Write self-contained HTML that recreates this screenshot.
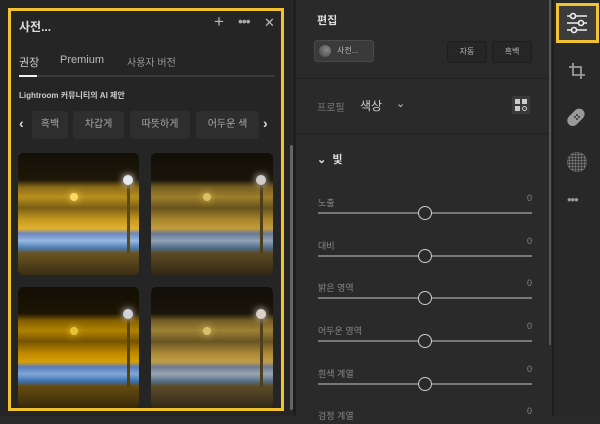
<!DOCTYPE html>
<html><head><meta charset="utf-8"><style>
*{box-sizing:border-box;margin:0;padding:0}
body{width:600px;height:416px;overflow:hidden;background:#2a2a2a;font-family:"Liberation Sans","Noto Sans CJK KR",sans-serif;color:#ddd;position:relative}
.a{position:absolute}
.img{position:absolute;border-radius:5px;overflow:hidden;background:linear-gradient(180deg,#141008 0%,#1d1708 22%,#8a6a18 28%,#b8901e 36%,#7a5e16 45%,#c89a20 55%,#e0b030 62%,#6a88c0 66%,#98b8e0 72%,#4a7ab0 78%,#6a5420 82%,#3a2e14 100%)}
.img::after{content:"";position:absolute;left:105px;top:22px;width:10px;height:10px;border-radius:50%;background:#e8e8f0;box-shadow:0 0 8px #fff}
.img::before{content:"";position:absolute;left:52px;top:40px;width:8px;height:8px;border-radius:50%;background:#ffd860;box-shadow:0 0 8px #ffd860}
.img i{position:absolute;left:109px;top:30px;width:3px;height:70px;background:#5a4818}
.sl{position:absolute;left:318px;width:214px}
.sl .l{font-size:9px;color:#888}
.sl .v{position:absolute;right:0;top:0;font-size:9px;color:#888}
.sl .t{position:absolute;left:0;right:0;top:19px;height:2px;background:#777}
.sl .k{position:absolute;left:100px;top:13px;width:14px;height:14px;border-radius:50%;border:1.5px solid #ccc;background:#2a2a2a}
.btn{position:absolute;border:1px solid #1e1e1e;background:#262626;border-radius:3px;font-size:8px;color:#bbb;text-align:center;line-height:20px}
.chip{position:absolute;top:111px;height:28px;background:#2e2e2e;border-radius:3px;font-size:10px;color:#aaa;text-align:center;line-height:28px}
</style></head><body>
<div class="a" style="left:0;top:0;width:292px;height:416px;background:#252525"></div>
<div class="a" style="left:8px;top:8px;width:276px;height:403px;border:3px solid #f2c230"></div>
<div class="a" style="left:19px;top:18px;font-size:12px;color:#ddd;font-weight:bold">사전...</div>
<div class="a" style="left:214px;top:12px;font-size:17px;color:#bbb">+</div>
<div class="a" style="left:238px;top:13px;font-size:14px;color:#aaa;letter-spacing:-1px">•••</div>
<div class="a" style="left:264px;top:15px;font-size:13px;color:#bbb">✕</div>
<div class="a" style="left:19px;top:54px;font-size:11px;color:#ccc">권장</div>
<div class="a" style="left:60px;top:54px;font-size:11px;color:#bbb">Premium</div>
<div class="a" style="left:127px;top:54px;font-size:10px;color:#999">사용자 버전</div>
<div class="a" style="left:19px;top:75px;width:256px;height:2px;background:#3a3a3a"></div>
<div class="a" style="left:19px;top:75px;width:18px;height:2px;background:#eee"></div>
<div class="a" style="left:19px;top:90px;font-size:8px;color:#ccc;font-weight:bold">Lightroom 커뮤니티의 AI 제안</div>
<div class="a" style="left:19px;top:115px;font-size:14px;color:#ddd;font-weight:bold">‹</div>
<div class="chip" style="left:32px;width:36px">흑백</div>
<div class="chip" style="left:73px;width:51px">차갑게</div>
<div class="chip" style="left:130px;width:60px">따뜻하게</div>
<div class="chip" style="left:196px;width:63px">어두운 색</div>
<div class="a" style="left:263px;top:115px;font-size:14px;color:#ddd;font-weight:bold">›</div>
<div class="img" style="left:18px;top:153px;width:121px;height:122px"><i></i></div>
<div class="img" style="left:151px;top:153px;width:122px;height:122px;filter:brightness(.85) sepia(.2)"><i></i></div>
<div class="img" style="left:18px;top:287px;width:121px;height:121px;filter:saturate(1.3) brightness(.9)"><i></i></div>
<div class="img" style="left:151px;top:287px;width:122px;height:121px;filter:sepia(.3) brightness(.85)"><i></i></div>
<div class="a" style="left:290px;top:145px;width:3px;height:265px;background:#666;border-radius:2px"></div>
<div class="a" style="left:293px;top:0;width:3px;height:416px;background:#1e1e1e"></div>

<div class="a" style="left:317px;top:12px;font-size:11px;font-weight:bold;color:#ddd">편집</div>
<div class="btn" style="left:314px;top:40px;width:60px;height:22px;background:#3a3a3a;border-color:#4a4a4a;text-align:left;padding-left:22px">사전...</div>
<div class="a" style="left:319px;top:45px;width:12px;height:12px;border-radius:50%;background:radial-gradient(circle at 65% 40%,#888,#444)"></div>
<div class="btn" style="left:447px;top:41px;width:40px;height:22px">자동</div>
<div class="btn" style="left:492px;top:41px;width:40px;height:22px">흑백</div>
<div class="a" style="left:296px;top:78px;width:256px;height:1px;background:#222"></div>
<div class="a" style="left:317px;top:99px;font-size:10px;color:#777">프로필</div>
<div class="a" style="left:360px;top:97px;font-size:12px;color:#ccc">색상</div>
<div class="a" style="left:396px;top:97px;font-size:11px;color:#ccc">⌄</div>
<div class="a" style="left:512px;top:96px;width:18px;height:18px;background:#3a3a3a"></div>
<div class="a" style="left:515px;top:99px;width:5px;height:5px;background:#ccc"></div>
<div class="a" style="left:522px;top:99px;width:5px;height:5px;background:#ccc"></div>
<div class="a" style="left:515px;top:106px;width:5px;height:5px;background:#ccc"></div>
<div class="a" style="left:522px;top:106px;width:5px;height:5px;border:1px solid #ccc;border-radius:50%"></div>
<div class="a" style="left:296px;top:133px;width:256px;height:1px;background:#222"></div>
<div class="a" style="left:317px;top:151px;font-size:11px;color:#ddd;font-weight:bold">⌄ &nbsp;빛</div>

<div class="sl" style="top:193px"><span class="l">노출</span><span class="v">0</span><div class="t"></div><div class="k"></div></div>
<div class="sl" style="top:236px"><span class="l">대비</span><span class="v">0</span><div class="t"></div><div class="k"></div></div>
<div class="sl" style="top:278px"><span class="l">밝은 영역</span><span class="v">0</span><div class="t"></div><div class="k"></div></div>
<div class="sl" style="top:321px"><span class="l">어두운 영역</span><span class="v">0</span><div class="t"></div><div class="k"></div></div>
<div class="sl" style="top:364px"><span class="l">흰색 계열</span><span class="v">0</span><div class="t"></div><div class="k"></div></div>
<div class="sl" style="top:406px"><span class="l">검정 계열</span><span class="v">0</span></div>

<div class="a" style="left:549px;top:0;width:2px;height:345px;background:#555"></div>
<div class="a" style="left:552px;top:0;width:2px;height:416px;background:#1e1e1e"></div>
<div class="a" style="left:554px;top:0;width:46px;height:416px;background:#282828"></div>
<div class="a" style="left:556px;top:3px;width:43px;height:40px;border:3px solid #f2c230;background:#3c3c3c"></div>
<svg class="a" style="left:565px;top:12px" width="24" height="22" viewBox="0 0 24 22" fill="none" stroke="#eee" stroke-width="1.6">
<path d="M2 4h20M2 11h20M2 18h20"/><circle cx="8" cy="4" r="2.5" fill="#3c3c3c"/><circle cx="16" cy="11" r="2.5" fill="#3c3c3c"/><circle cx="9" cy="18" r="2.5" fill="#3c3c3c"/></svg>
<svg class="a" style="left:566px;top:60px" width="22" height="22" viewBox="0 0 22 22" fill="none" stroke="#999" stroke-width="1.8">
<path d="M7 3v12h12M3 7h12v12"/></svg>
<svg class="a" style="left:566px;top:106px" width="22" height="22" viewBox="0 0 22 22"><rect x="5" y="2" width="11" height="20" rx="5.5" transform="rotate(45 11 11)" fill="#999"/><circle cx="9" cy="11" r="1" fill="#333"/><circle cx="13" cy="11" r="1" fill="#333"/><circle cx="11" cy="9" r="1" fill="#333"/><circle cx="11" cy="13" r="1" fill="#333"/></svg>
<div class="a" style="left:567px;top:152px;width:20px;height:20px;border-radius:50%;background:radial-gradient(circle,#888 1px,transparent 1.2px) 0 0/3px 3px;border:1px dotted #777"></div>
<div class="a" style="left:567px;top:192px;font-size:13px;color:#999;letter-spacing:-1px">•••</div>
</body></html>
